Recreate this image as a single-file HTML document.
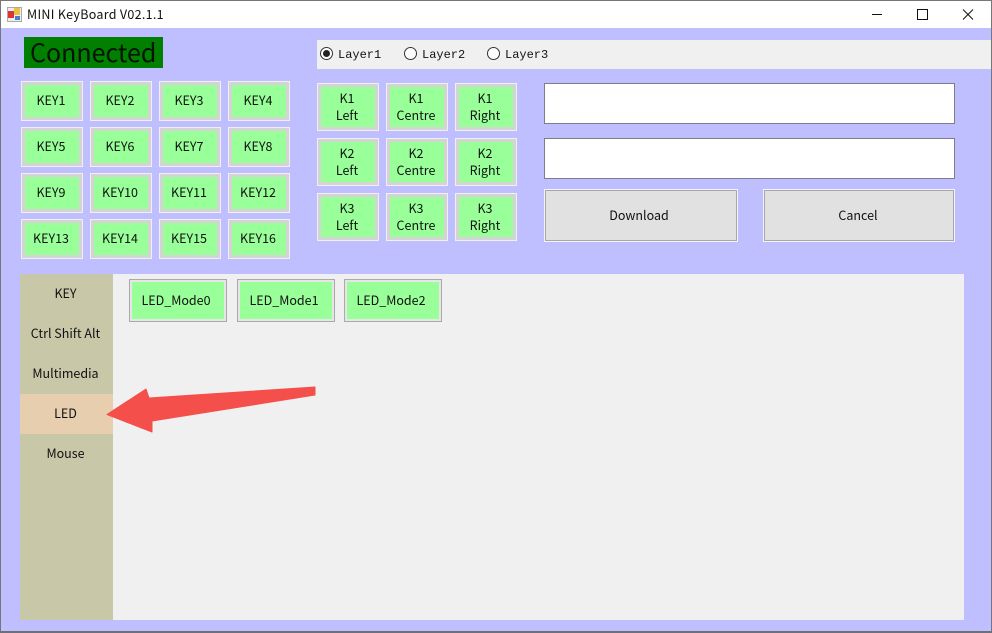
<!DOCTYPE html>
<html>
<head>
<meta charset="utf-8">
<style>
html,body{margin:0;padding:0;width:992px;height:633px;overflow:hidden;background:#bfbfff}
body{position:relative;font-family:"Noto Sans CJK SC","Liberation Sans",sans-serif;font-size:12.5px;color:#111}
div{box-sizing:border-box;position:absolute}
.k{width:62px;background:#9f9;border:1px solid #f0f0f4;outline:none;box-shadow:inset 0 0 0 3px #d4d4d4;display:flex;align-items:center;justify-content:center;text-align:center;line-height:17px;padding-right:2px}
.h40{height:40px;padding-bottom:4px}.h48{height:48px;padding-bottom:2px}
.in{left:544px;width:411px;height:41px;background:#fff;border:1px solid #7d7d8a}
.b{top:189px;height:53px;background:#e1e1e1;border:1px solid #f2f2f8;box-shadow:inset 0 0 0 1px #a8a8a8;display:flex;align-items:center;justify-content:center;padding-bottom:2px}
.t{left:20px;width:93px;height:40px;background:#c8c8a9;display:flex;align-items:center;justify-content:center;padding-bottom:4px;padding-right:2px}
.m{top:279px;width:98px;height:43px;background:#9f9;border:1px solid #aaa;box-shadow:inset 0 0 0 2px #e6e6e6;display:flex;align-items:center;justify-content:center;padding-bottom:2px;padding-right:4px}
.r{top:47px;width:13px;height:13px;border:1px solid #333;border-radius:50%;background:#fff}
.l{top:47px;font-family:"Liberation Mono","Noto Sans CJK SC",monospace;font-size:12px;line-height:16px;color:#111}
</style>
</head>
<body>
<!-- title bar -->
<div style="left:0;top:0;width:992px;height:28px;background:#fff"></div>
<svg style="position:absolute;left:7px;top:7px" width="15" height="15" viewBox="0 0 15 15">
<rect x="0.5" y="0.5" width="14" height="14" fill="#eee" stroke="#aaa"/>
<rect x="1" y="4" width="6" height="7" fill="#d33"/>
<rect x="7" y="1" width="6" height="7" fill="#ecc040"/>
<rect x="8" y="9" width="5" height="4" fill="#4a7fd0"/>
</svg>
<div style="left:27px;top:5px;font-size:12.5px;line-height:17px;white-space:nowrap;letter-spacing:.3px">MINI KeyBoard V02.1.1</div>
<svg style="position:absolute;left:860px;top:0" width="120" height="28" viewBox="0 0 120 28" fill="none" stroke="#111" stroke-width="1">
<path d="M12 14.5H22"/>
<rect x="57.5" y="9.5" width="10" height="10"/>
<path d="M103 9.5L113 19.5M113 9.5L103 19.5"/>
</svg>

<!-- status -->
<div style="left:24px;top:37px;width:139px;height:31px;background:#007f00;color:#001300;font-size:25px;line-height:31px;padding-left:6px;white-space:nowrap;font-family:'Noto Sans CJK SC','Liberation Sans',sans-serif">Connected</div>

<!-- layer bar -->
<div style="left:317px;top:40px;width:675px;height:29px;background:#f0f0f0"></div>
<div class="r" style="left:320px"></div>
<div style="left:323px;top:50px;width:7px;height:7px;border-radius:50%;background:#222"></div>
<div class="l" style="left:338px">Layer1</div>
<div class="r" style="left:404px"></div>
<div class="l" style="left:422px">Layer2</div>
<div class="r" style="left:487px"></div>
<div class="l" style="left:505px">Layer3</div>

<!-- keys -->
<div class="k h40" style="left:21px;top:81px">KEY1</div>
<div class="k h40" style="left:90px;top:81px">KEY2</div>
<div class="k h40" style="left:159px;top:81px">KEY3</div>
<div class="k h40" style="left:228px;top:81px">KEY4</div>
<div class="k h40" style="left:21px;top:127px">KEY5</div>
<div class="k h40" style="left:90px;top:127px">KEY6</div>
<div class="k h40" style="left:159px;top:127px">KEY7</div>
<div class="k h40" style="left:228px;top:127px">KEY8</div>
<div class="k h40" style="left:21px;top:173px">KEY9</div>
<div class="k h40" style="left:90px;top:173px">KEY10</div>
<div class="k h40" style="left:159px;top:173px">KEY11</div>
<div class="k h40" style="left:228px;top:173px">KEY12</div>
<div class="k h40" style="left:21px;top:219px">KEY13</div>
<div class="k h40" style="left:90px;top:219px">KEY14</div>
<div class="k h40" style="left:159px;top:219px">KEY15</div>
<div class="k h40" style="left:228px;top:219px">KEY16</div>

<!-- knobs -->
<div class="k h48" style="left:317px;top:83px">K1<br>Left</div>
<div class="k h48" style="left:386px;top:83px">K1<br>Centre</div>
<div class="k h48" style="left:455px;top:83px">K1<br>Right</div>
<div class="k h48" style="left:317px;top:138px">K2<br>Left</div>
<div class="k h48" style="left:386px;top:138px">K2<br>Centre</div>
<div class="k h48" style="left:455px;top:138px">K2<br>Right</div>
<div class="k h48" style="left:317px;top:193px">K3<br>Left</div>
<div class="k h48" style="left:386px;top:193px">K3<br>Centre</div>
<div class="k h48" style="left:455px;top:193px">K3<br>Right</div>

<!-- inputs -->
<div class="in" style="top:83px"></div>
<div class="in" style="top:138px"></div>
<div class="b" style="left:544px;width:194px;padding-right:4px">Download</div>
<div class="b" style="left:763px;width:192px;padding-right:2px">Cancel</div>

<!-- tab panel -->
<div style="left:20px;top:274px;width:93px;height:346px;background:#c8c8a9"></div>
<div style="left:113px;top:274px;width:851px;height:346px;background:#f0f0f0"></div>
<div class="t" style="top:274px">KEY</div>
<div class="t" style="top:314px">Ctrl Shift Alt</div>
<div class="t" style="top:354px">Multimedia</div>
<div class="t" style="top:394px;background:#e6ceae">LED</div>
<div class="t" style="top:434px">Mouse</div>

<div class="m" style="left:129px">LED_Mode0</div>
<div class="m" style="left:237px">LED_Mode1</div>
<div class="m" style="left:344px">LED_Mode2</div>

<!-- arrow -->
<svg style="position:absolute;left:0;top:0" width="992" height="633" viewBox="0 0 992 633">
<path d="M107 414.5L146 389L149 398L315 387L315 395L152 421L152 432Z" fill="#f44f4a" stroke="#f44f4a" stroke-width="1" stroke-linejoin="round"/>
</svg>

<!-- window edges -->
<div style="left:0;top:0;width:992px;height:1px;background:#777"></div>
<div style="left:0;top:0;width:1px;height:631px;background:#777"></div>
<div style="left:991px;top:0;width:1px;height:631px;background:#777"></div>
<div style="left:0;top:631px;width:992px;height:2px;background:#6f6f78"></div>
</body>
</html>
